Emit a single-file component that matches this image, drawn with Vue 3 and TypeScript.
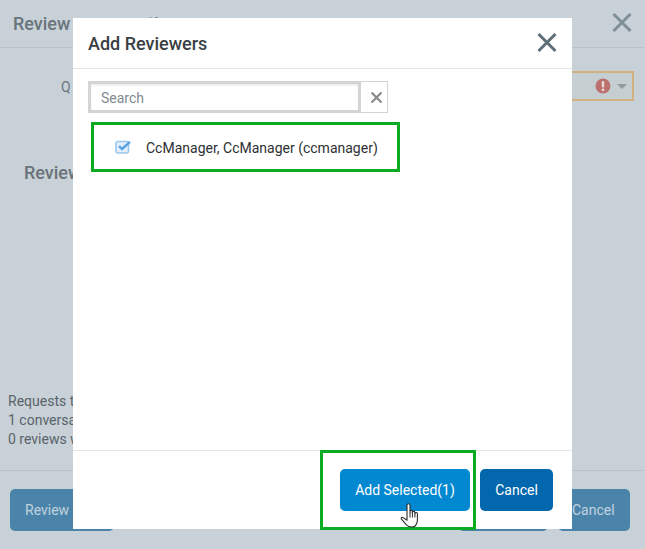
<script setup lang="ts">
const stats: string[] = ['Requests to review', '1 conversation', '0 reviews with issues']
</script>

<template>
  <div class="page">
    <header class="top">
      <span class="top-title">Review conversation</span>
      <svg class="x" width="20" height="20" viewBox="0 0 20 20"><path d="M1.5 1 18.5 18M18.5 1 1.5 18" /></svg>
    </header>
    <main class="body">
      <div class="q-row">
        <label class="q-label">Q</label>
        <div class="q-select">
          <svg width="16" height="16" viewBox="0 0 16 16"><circle cx="8" cy="8" r="7.5" fill="#bd716e" /><rect x="6.8" y="3" width="2.4" height="6.5" rx="1" fill="#e6dcdc" /><circle cx="8" cy="11.8" r="1.4" fill="#e6dcdc" /></svg>
          <i class="caret"></i>
        </div>
      </div>
      <h2 class="section">Reviewers</h2>
      <div class="stats">
        <div v-for="s in stats" :key="s">{{ s }}</div>
      </div>
    </main>
    <footer class="foot">
      <button class="bg-btn first">Review</button>
      <span class="spacer"></span>
      <button class="bg-btn mid">Save</button>
      <button class="bg-btn last">Cancel</button>
    </footer>

    <section class="modal">
      <div class="m-head">
        <h1>Add Reviewers</h1>
        <svg class="x" width="20" height="20" viewBox="0 0 20 20"><path class="dark" d="M1.5 1 18.5 18M18.5 1 1.5 18" /></svg>
      </div>
      <div class="m-body">
        <div class="search">
          <input class="search-input" placeholder="Search" />
          <span class="clear"><svg width="11" height="11" viewBox="0 0 11 11"><path d="M.5 .5 10.5 10.5M10.5 .5 .5 10.5" /></svg></span>
        </div>
        <div class="option">
          <svg width="17" height="14" viewBox="0 0 17 14">
            <rect x="1" y="1.5" width="12.5" height="11.5" rx="2" fill="#e3f0fb" stroke="#9cc8ec" stroke-width="1.6" />
            <path d="M4 6 7 9 15 1.8" fill="none" stroke="#5ba3e0" stroke-width="2.4" />
          </svg>
          <span>CcManager, CcManager (ccmanager)</span>
        </div>
      </div>
      <div class="m-foot">
        <button class="primary">Add Selected(1)</button>
        <button class="secondary">Cancel</button>
      </div>
    </section>

    <div class="mark mark-option"></div>
    <div class="mark mark-add"></div>
    <svg class="hand" width="20" height="25" viewBox="0 0 20 25">
      <path d="M7 14.5V2.4C7 1.3 7.7.7 8.5.7S10 1.3 10 2.4V9.6L10.1 8.2C10.3 6.9 12.2 7 12.3 8.3L12.4 10 12.6 8.9C12.9 7.7 14.7 7.9 14.8 9.2L14.9 10.8 15.1 10.2C15.5 9.1 17.3 9.4 17.4 10.7V17C17.4 19 16.9 20.2 16.2 21.4 15.4 23 13.9 24 11.8 24 9.6 24 8 23.6 6.6 22 5 20.2 3.2 18.2 1.5 16.2.7 15.1 1.8 13.7 3.2 14.6L7 17.2Z" fill="#fff" stroke="#2b2b2b" stroke-width="1.1" stroke-linejoin="round" />
      <path d="M10 9.6V14.5M12.4 10V14.5M14.9 10.8V14.5" stroke="#2b2b2b" stroke-width="1" fill="none" />
    </svg>
  </div>
</template>

<style>
html, body { margin: 0; }
</style>

<style scoped>
.page {
  position: relative;
  width: 645px;
  height: 549px;
  overflow: hidden;
  display: flex;
  flex-direction: column;
  background: #c8d1d7;
  font-family: Roboto, "Liberation Sans", sans-serif;
  color: #656d72;
  font-size: 14px;
}
.top {
  height: 48px;
  flex: none;
  box-sizing: border-box;
  border-bottom: 1px solid #b9c3ca;
  display: flex;
  justify-content: space-between;
  align-items: center;
  padding: 0 13px 0 13px;
}
.top .x { position: relative; top: -1px; }
.top-title { font-size: 18px; font-weight: 500; color: #69747a; }
.x path { stroke: #7f8f97; stroke-width: 3; fill: none; }
.x path.dark { stroke: #5f7079; }
.body {
  flex: 1;
  display: flex;
  flex-direction: column;
  padding: 23px 11px 0 8px;
}
.q-row {
  display: flex;
  justify-content: space-between;
  align-items: center;
  height: 30px;
  padding-left: 53px;
}
.q-label { font-size: 14px; color: #6c757a; position: relative; top: 1px; }
.q-select {
  box-sizing: border-box;
  width: 100px;
  height: 30px;
  border: 2px solid #d2b07f;
  display: flex;
  align-items: center;
  justify-content: flex-end;
  gap: 6px;
  padding-right: 5px;
  background: #c5ced0;
}
.caret {
  width: 0;
  height: 0;
  border-left: 5px solid transparent;
  border-right: 5px solid transparent;
  border-top: 5px solid #929a9e;
}
.section {
  margin: 61px 0 0 16px;
  font-size: 18px;
  font-weight: 500;
  color: #6a7379;
}
.stats {
  margin-top: auto;
  line-height: 19px;
  padding-bottom: 21px;
  color: #59636a;
}
.foot {
  flex: none;
  height: 79px;
  box-sizing: border-box;
  border-top: 1px solid #b9c3ca;
  padding: 18px 15px 0 10px;
  display: flex;
  align-items: flex-start;
  gap: 10px;
}
.spacer { flex: 1; }
.bg-btn {
  height: 42px;
  border: 0;
  border-radius: 5px;
  background: #4a84ab;
  color: #c2d2de;
  font: 400 14px Roboto, sans-serif;
  text-align: left;
  padding: 0 0 0 15px;
}
.first { width: 104px; }
.mid { width: 90px; }
.last { width: 72px; padding-left: 14px; }
.modal {
  position: absolute;
  left: 73px;
  top: 18px;
  width: 499px;
  height: 511px;
  background: #fff;
  display: flex;
  flex-direction: column;
  color: #333;
}
.m-head {
  height: 51px;
  flex: none;
  box-sizing: border-box;
  border-bottom: 1px solid #e5e5e5;
  display: flex;
  align-items: center;
  justify-content: space-between;
  padding: 0 15px 0 15px;
}
.m-head h1 {
  margin: 0;
  font-size: 18px;
  font-weight: 500;
  color: #3a3f44;
}
.m-body {
  flex: 1;
  padding: 12px 15px 0 15px;
}
.search {
  display: flex;
  width: 300px;
  height: 32px;
}
.search-input {
  flex: 1;
  min-width: 0;
  box-sizing: border-box;
  height: 32px;
  border: 3px solid #d4d4d4;
  padding: 2px 10px 0;
  outline: none;
  font: 14px Roboto, sans-serif;
  box-shadow: inset 0 2px 2px #eee;
}
.search-input::placeholder { color: #7f8a92; opacity: 1; }
.clear {
  box-sizing: border-box;
  width: 27px;
  height: 32px;
  border: 1px solid #d4d4d4;
  border-left: 0;
  display: flex;
  align-items: center;
  justify-content: center;
  padding-left: 5px;
}
.clear path { stroke: #8a8a8a; stroke-width: 2.2; fill: none; }
.option {
  display: flex;
  align-items: center;
  gap: 14px;
  margin: 9px 0 0 0;
  height: 50px;
  padding-left: 27px;
  box-sizing: border-box;
  color: #2d3033;
  font-size: 14px;
}
.option span { position: relative; top: 1px; }
.m-foot {
  height: 79px;
  flex: none;
  box-sizing: border-box;
  border-top: 1px solid #e5e5e5;
  display: flex;
  justify-content: flex-end;
  gap: 10px;
  padding: 18px 19px 0 0;
}
.m-foot button {
  height: 42px;
  border: 0;
  border-radius: 5px;
  color: #fff;
  font: 400 14px Roboto, sans-serif;
  padding: 0;
}
.primary { width: 130px; background: #0288d1; }
.secondary { width: 73px; background: #0267ad; }
.mark {
  position: absolute;
  box-sizing: border-box;
  border: 3px solid #0aab22;
}
.mark-option { left: 91px; top: 122px; width: 309px; height: 50px; }
.mark-add { left: 320px; top: 450px; width: 156px; height: 80px; }
.hand { position: absolute; left: 400px; top: 503px; }
</style>
